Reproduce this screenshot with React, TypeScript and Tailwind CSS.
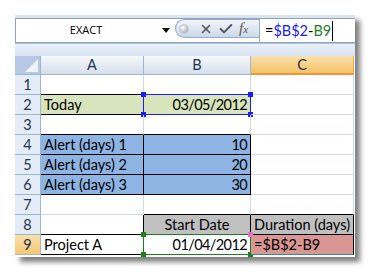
import { Check, X } from "lucide-react";

type Cell = {
  text?: string;
  cls?: string;
  sel?: "blue" | "green";
};

const font = { fontFamily: "Lato, 'Open Sans', sans-serif" };

const base =
  "relative h-full flex items-center border-r border-b px-[3px] shrink-0 text-[14.5px] text-black whitespace-nowrap";
const g = "border-r-[#d0d7e5] border-b-[#d0d7e5]";
const gk = "border-r-[#d0d7e5] border-b-black";
const kk = "border-r-black border-b-black";
const num = "justify-end tracking-[-0.6px]";

const rows: Cell[][] = [
  [{ cls: gk }, { cls: g }, { cls: g }],
  [
    { text: "Today", cls: `${kk} bg-[#d8e4bc]` },
    { text: "03/05/2012", cls: `${g} bg-[#d8e4bc] ${num}`, sel: "blue" },
    { cls: g },
  ],
  [{ cls: gk }, { cls: gk }, { cls: g }],
  [
    { text: "Alert (days) 1", cls: `${kk} bg-[#8eb4e3]` },
    { text: "10", cls: `${kk} bg-[#8eb4e3] ${num}` },
    { cls: g },
  ],
  [
    { text: "Alert (days) 2", cls: `${kk} bg-[#8eb4e3]` },
    { text: "20", cls: `${kk} bg-[#8eb4e3] ${num}` },
    { cls: g },
  ],
  [
    { text: "Alert (days) 3", cls: `${kk} bg-[#8eb4e3]` },
    { text: "30", cls: `${kk} bg-[#8eb4e3] ${num}` },
    { cls: g },
  ],
  [{ cls: g }, { cls: gk }, { cls: gk }],
  [
    { cls: kk },
    { text: "Start Date", cls: `${kk} bg-[#c0c0c0] justify-center` },
    { text: "Duration (days)", cls: `${kk} bg-[#c0c0c0] justify-center px-0` },
  ],
  [
    { text: "Project A", cls: kk },
    { text: "01/04/2012", cls: `${kk} ${num}`, sel: "green" },
    { text: "=$B$2-B9", cls: "border-r-black border-b-[#2f8f8f] bg-[#da9694]" },
  ],
];

const widths = ["w-[103px]", "w-[107px]", "w-[103px]"];

const Selection = ({ kind }: { kind: "blue" | "green" }) => {
  const line = kind === "blue" ? "border-[#1c1cf5]" : "border-[#1f7f1f]";
  const dot = kind === "blue" ? "bg-[#1c1cf5]" : "bg-[#1f7f1f]";
  return (
    <div className={`absolute -left-px -top-px -right-px -bottom-px border ${line} pointer-events-none`}>
      <div className={`absolute -left-[3px] -top-[3px] w-[5px] h-[5px] ${dot}`} />
      <div
        className={`absolute -right-[3px] -top-[3px] w-[5px] h-[5px] ${
          kind === "blue" ? dot : "bg-[#e36fc6]"
        }`}
      />
      <div className={`absolute -left-[3px] -bottom-[3px] w-[5px] h-[5px] ${dot}`} />
      <div className={`absolute -right-[3px] -bottom-[3px] w-[5px] h-[5px] ${dot}`} />
    </div>
  );
};

const FormulaBar = () => (
  <>
    <div className="h-[3px] bg-[#dce4ee]" />
    <div className="h-[25px] flex bg-white border-t border-b border-[#8ea3bf] border-l">
      <div className="w-[159px] flex items-center">
        <div
          className="w-[140px] text-center text-[11px] text-black"
          style={{ fontFamily: "'Open Sans', 'Noto Sans', sans-serif" }}
        >
          EXACT
        </div>
        <svg width="8" height="5" viewBox="0 0 8 5" className="ml-[6px]">
          <path d="M0 0 H8 L4 5 Z" fill="#111" />
        </svg>
      </div>
      <div className="w-[84px] flex flex-col">
        <div className="h-[19px] flex items-center rounded-l-full border border-r-0 border-[#98abc6] bg-gradient-to-b from-[#f2f5fa] to-[#ccd8e8]">
          <div className="ml-[3px] w-[10px] h-[10px] rounded-full bg-[radial-gradient(circle_at_35%_35%,#ffffff,#b3b9c3_70%)] border border-[#c4cad4]" />
          <X size={14} strokeWidth={2.8} className="ml-[10px] text-[#575757]" />
          <Check size={16} strokeWidth={3} className="ml-[5px] text-[#575757]" />
          <span
            className="ml-[5px] italic text-[15px] leading-none text-[#575757]"
            style={{ fontFamily: "'Liberation Serif', serif" }}
          >
            f<span className="text-[11px]">x</span>
          </span>
        </div>
      </div>
      <div className="flex-1 flex items-center border-l border-[#98abc6] pl-[5px] text-[14.5px]" style={font}>
        <span className="text-black">=</span>
        <span className="text-[#1c1cf5]">$B$2</span>
        <span className="text-black">-</span>
        <span className="text-[#1f7f1f]">B9</span>
        <span className="ml-px w-px h-[20px] bg-black" />
      </div>
    </div>
    <div className="h-[13px] border-t border-[#b4c4d8] bg-gradient-to-b from-[#e8eff8] to-[#dae5f3]" />
  </>
);

const HeaderRow = () => (
  <div className="h-[19px] flex text-[14.5px] text-[#1f3350]" style={font}>
    <div className="w-[26px] h-full shrink-0 border-r border-b border-[#9eb6ce] bg-[#b6c8e4] flex items-end justify-end p-[2px]">
      <svg width="13" height="13" viewBox="0 0 13 13">
        <path d="M13 0 V13 H0 Z" fill="#eef3fa" />
      </svg>
    </div>
    {["A", "B", "C"].map((c, i) => (
      <div
        key={c}
        className={`${widths[i]} h-full shrink-0 flex items-center justify-center border-r ${
          c === "C"
            ? "border-r-[#f0a64a] border-b-2 border-b-[#f29436] bg-gradient-to-b from-[#fae0ac] to-[#f2c366]"
            : "border-r-[#9eb6ce] border-b border-b-[#9eb6ce] bg-gradient-to-b from-[#f6f9fc] to-[#d6dfeb]"
        }`}
      >
        {c}
      </div>
    ))}
  </div>
);

export default function App() {
  return (
    <div className="w-[373px] h-[277px] bg-white p-[15px]">
      <div className="w-[340px] bg-white shadow-[5px_5px_5px_rgba(0,0,0,0.5)]">
        <FormulaBar />
        <HeaderRow />
        {rows.map((row, r) => (
          <div key={r} className="h-[20px] flex" style={font}>
            <div
              className={`w-[26px] h-full shrink-0 flex items-center justify-center border-r border-b border-[#9eb6ce] text-[14.5px] text-[#1f3350] ${
                r === 8 ? "bg-gradient-to-b from-[#fadfa8] to-[#f5c874]" : "bg-[#e4ecf7]"
              }`}
            >
              {r + 1}
            </div>
            {row.map((cell, c) => (
              <div key={c} className={`${base} ${widths[c]} ${cell.cls ?? ""}`}>
                {cell.text}
                {cell.sel && <Selection kind={cell.sel} />}
              </div>
            ))}
          </div>
        ))}
        <div className="h-[2px]" />
      </div>
    </div>
  );
}
